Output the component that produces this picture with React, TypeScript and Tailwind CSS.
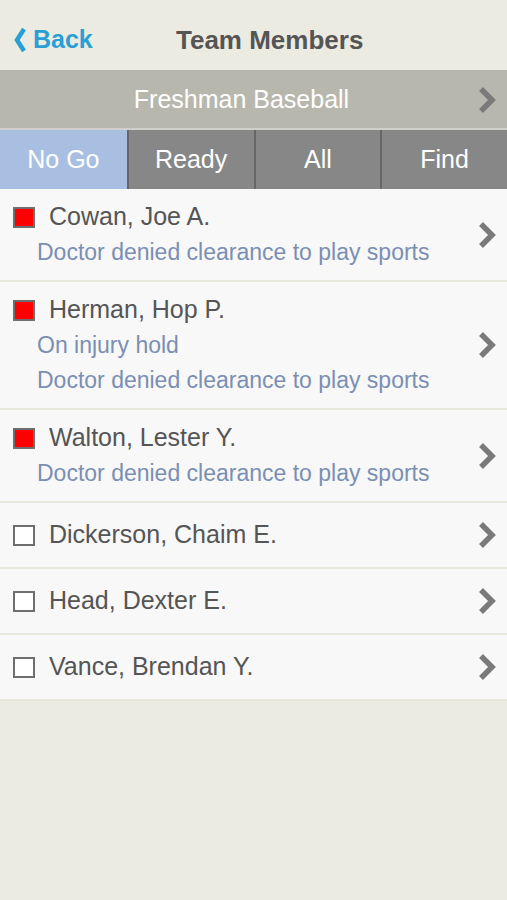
type Member = {
  name: string;
  flagged: boolean;
  notes: string[];
};

const members: Member[] = [
  { name: 'Cowan, Joe A.', flagged: true, notes: ['Doctor denied clearance to play sports'] },
  { name: 'Herman, Hop P.', flagged: true, notes: ['On injury hold', 'Doctor denied clearance to play sports'] },
  { name: 'Walton, Lester Y.', flagged: true, notes: ['Doctor denied clearance to play sports'] },
  { name: 'Dickerson, Chaim E.', flagged: false, notes: [] },
  { name: 'Head, Dexter E.', flagged: false, notes: [] },
  { name: 'Vance, Brendan Y.', flagged: false, notes: [] },
];

const tabs = ['No Go', 'Ready', 'All', 'Find'];

function Chevron({ className }: { className: string }) {
  return (
    <svg viewBox="0 0 20 28" className={className}>
      <path d="M4 3 L15 14 L4 25" fill="none" stroke="currentColor" strokeWidth="5.5" strokeLinejoin="miter" />
    </svg>
  );
}

export default function App() {
  return (
    <div className="min-h-[900px] bg-[#ecebe2] font-['Liberation_Sans',Arial,sans-serif]">
      <div className="h-[70px] flex items-center relative pt-[10px]">
        <div className="flex items-center pl-[13px] text-[#2a9fd6]">
          <svg viewBox="0 0 14 26" className="w-[14px] h-[26px]">
            <path d="M11 2 L4 13 L11 24" fill="none" stroke="currentColor" strokeWidth="4.5" />
          </svg>
          <span className="text-[25px] font-bold ml-[6px]">Back</span>
        </div>
        <div className="absolute left-[176px] text-[26px] font-bold text-[#555555]">Team Members</div>
      </div>

      <div className="h-[60px] bg-[#b8b7ae] flex items-center justify-center relative border-b-2 border-[#cfd0cc] pt-[2px]">
        <span className="text-white text-[25px] ml-[-24px]">Freshman Baseball</span>
        <Chevron className="absolute right-[10px] w-[20px] h-[28px] text-[#7a7a7a]" />
      </div>

      <div className="grid grid-cols-4 h-[59px]">
        {tabs.map((t, i) => (
          <div
            key={t}
            className={
              i === 0
                ? 'bg-[#a9bfe1] flex items-center justify-center text-white text-[25px]'
                : 'bg-[#878787] flex items-center justify-center text-white text-[25px] border-l-2 border-[#666666]'
            }
          >
            {t}
          </div>
        ))}
      </div>

      <div>
        {members.map((m) => (
          <div
            key={m.name}
            className={
              m.notes.length > 0
                ? 'bg-[#f8f8f8] border-b-2 border-[#e8e7dc] flex items-center pr-[10px] pt-[10px] pb-[10px]'
                : 'bg-[#f8f8f8] border-b-2 border-[#e8e7dc] flex items-center pr-[10px] h-[66px]'
            }
          >
            <div className="flex-1 pl-[13px]">
              <div className="flex items-center h-[36px]">
                {m.flagged ? (
                  <div className="w-[22px] h-[21px] bg-[#ff0000] border-2 border-[#6e6e6e]" />
                ) : (
                  <div className="w-[22px] h-[21px] bg-white border-2 border-[#6e6e6e]" />
                )}
                <span className="ml-[14px] text-[25px] text-[#555555]">{m.name}</span>
              </div>
              {m.notes.map((n) => (
                <div key={n} className="pl-[24px] h-[35px] flex items-center text-[23px] text-[#7a8fb2]">
                  {n}
                </div>
              ))}
            </div>
            <Chevron className="w-[20px] h-[28px] text-[#7a7a7a]" />
          </div>
        ))}
      </div>
    </div>
  );
}
